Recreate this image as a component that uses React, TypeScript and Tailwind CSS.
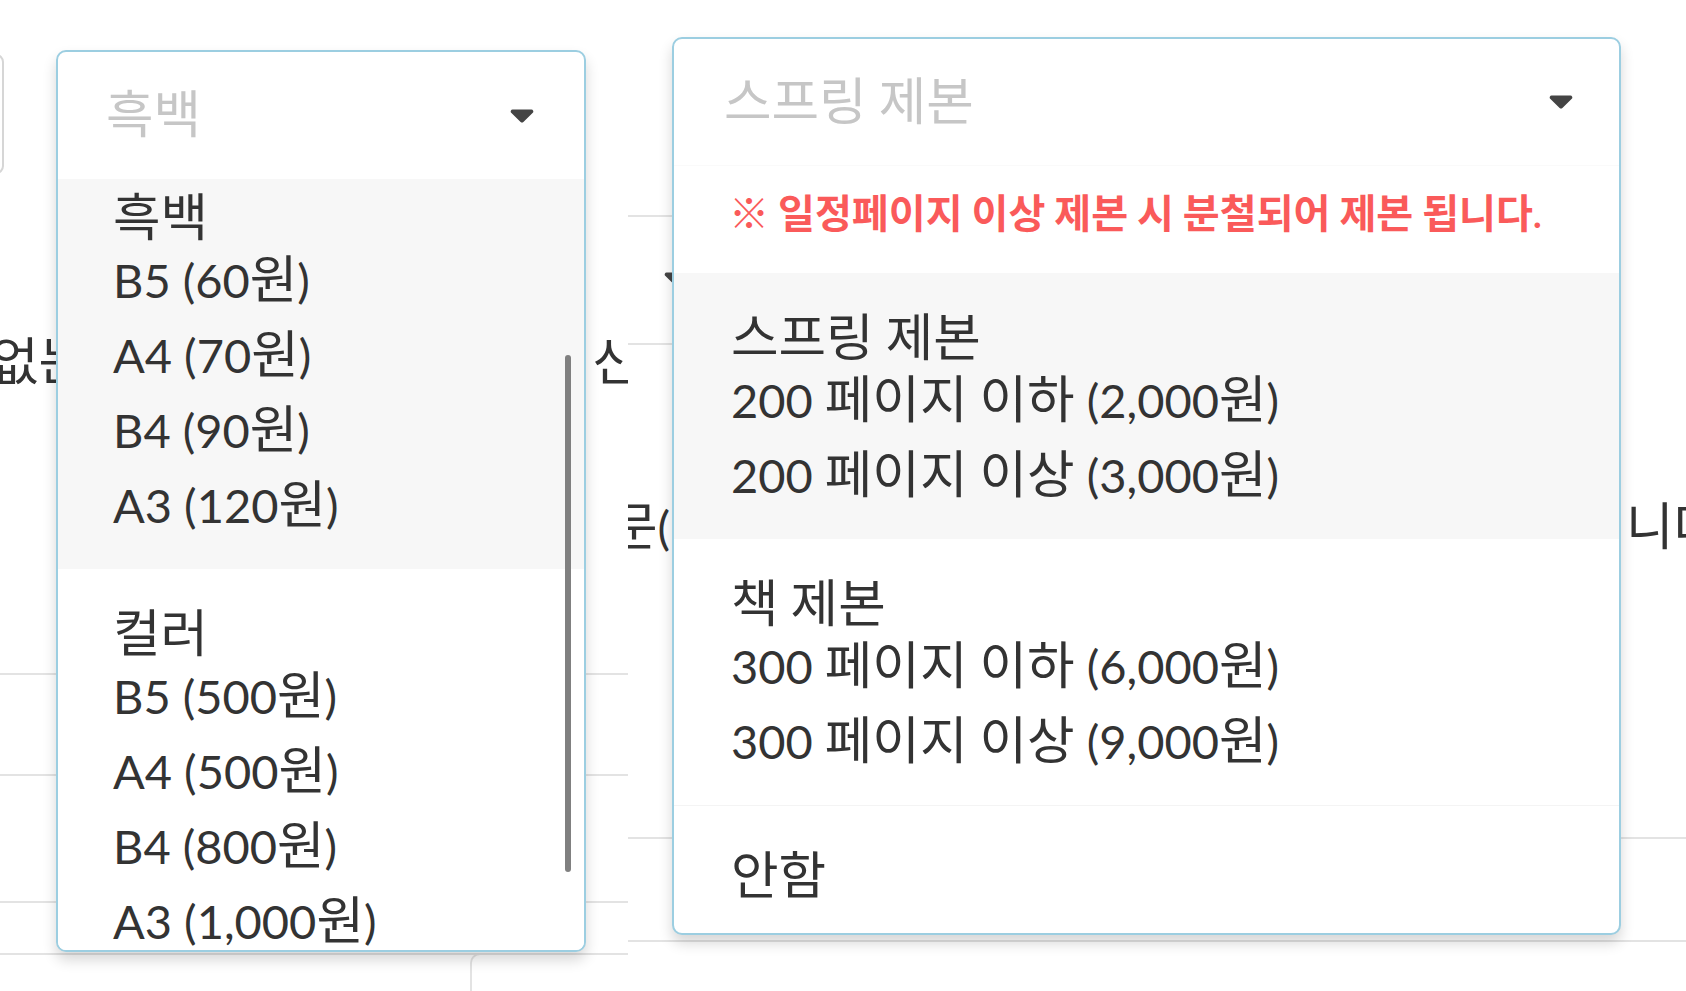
import React from "react";

const Caret = () => (
  <svg width="24" height="14" viewBox="0 0 24 14" aria-hidden="true" className="block">
    <path
      d="M2.6 0.6 H21.4 A1.9 1.9 0 0 1 22.8 3.8 L13.4 12.9 A2 2 0 0 1 10.6 12.9 L1.2 3.8 A1.9 1.9 0 0 1 2.6 0.6 Z"
      fill="#444"
    />
  </svg>
);

// Korean runs render a touch larger, as the reference's Korean face does
const K = ({ t }: { t: string }) => (
  <>
    {t.split(/([\u3131-\uD79D※]+)/).map((part, i) =>
      /[\u3131-\uD79D※]/.test(part) ? (
        <span key={i} className="text-[1.1em] leading-[0]">
          {part}
        </span>
      ) : (
        <React.Fragment key={i}>{part}</React.Fragment>
      )
    )}
  </>
);

const Option = ({ t, pad }: { t: string; pad: string }) => (
  <div className={`${pad} py-[10px] leading-[55px] text-[47px] text-[#333] whitespace-nowrap`}>
    <K t={t} />
  </div>
);

const Group = ({ label, items, gray, pad }: { label: string; items: string[]; gray?: boolean; pad: string }) => (
  <div className={`pt-[40px] pb-[26px] ${gray ? "bg-[#f7f7f7]" : "bg-white"}`}>
    <div className={`${pad} leading-[50px] text-[47px] text-[#333] whitespace-nowrap`}>
      <K t={label} />
    </div>
    {items.map((t) => (
      <Option key={t} t={t} pad={pad} />
    ))}
  </div>
);

const Line = ({ className = "" }: { className?: string }) => <div className={`h-[2px] bg-[#e3e3e3] ${className}`} />;

const bgText = "leading-[55px] text-[47px] text-[#333] whitespace-nowrap";

export default function App() {
  return (
    <div className="w-[1686px] h-[991px] bg-white overflow-hidden flex font-['Lato','Noto_Sans_CJK_KR',sans-serif]">
      {/* Left half of the composite */}
      <div className="relative w-[628px] h-full shrink-0 overflow-hidden">
        {/* page underneath */}
        <div className="flex flex-col">
          <div className="mt-[54px] ml-[-100px] w-[104px] h-[120px] border-2 border-[#d6d6d6] rounded-[8px]" />
          <div className={`mt-[161px] flex ${bgText}`}>
            <span className="ml-[-9px] w-[601px] shrink-0">
              <K t="없는 경우" />
            </span>
            <span>
              <K t="신청" />
            </span>
          </div>
          <Line className="mt-[283px]" />
          <Line className="mt-[99px]" />
          <Line className="mt-[125px]" />
          <Line className="mt-[50px]" />
          <div className="ml-[470px] mt-[-2px] h-[60px] border-l-2 border-t-2 border-[#e3e3e3] rounded-tl-[10px]" />
        </div>

        {/* open select menu */}
        <div className="absolute left-[56px] top-[50px] z-10 w-[530px] h-[902px] flex flex-col bg-white border-2 border-[#9ccee1] rounded-[10px] overflow-hidden shadow-[0_8px_14px_rgba(0,0,0,0.16)]">
          <div className="h-[127px] shrink-0 flex items-center justify-between pl-[48px] pr-[50px]">
            <span className="leading-[55px] text-[47px] text-[#c6c6c6]">
              <K t="흑백" />
            </span>
            <Caret />
          </div>
          <div className="relative flex-1 overflow-hidden">
            <div className="mt-[-26px]">
              <Group pad="pl-[55px]" gray label="흑백" items={["B5 (60원)", "A4 (70원)", "B4 (90원)", "A3 (120원)"]} />
              <Group pad="pl-[55px]" label="컬러" items={["B5 (500원)", "A4 (500원)", "B4 (800원)", "A3 (1,000원)"]} />
            </div>
            <div className="absolute right-[13px] top-[176px] w-[6px] h-[517px] rounded-full bg-[#808080]" />
          </div>
        </div>
      </div>

      {/* Right half of the composite */}
      <div className="relative flex-1 h-full overflow-hidden">
        <div className="flex flex-col">
          <Line className="mt-[215px] w-[300px]" />
          <div className="mt-[55px] ml-[36px]">
            <Caret />
          </div>
          <Line className="mt-[57px] w-[300px]" />
          <div className={`mt-[155px] flex ${bgText}`}>
            <span className="ml-[-18px] w-[1016px] shrink-0">
              <K t="문(" />
            </span>
            <span>
              <K t="니다" />
            </span>
          </div>
          <Line className="mt-[282px]" />
          <Line className="mt-[101px]" />
        </div>

        <div className="absolute left-[44px] top-[37px] z-10 w-[949px] flex flex-col bg-white border-2 border-[#9ccee1] rounded-[10px] overflow-hidden shadow-[0_8px_14px_rgba(0,0,0,0.16)]">
          <div className="h-[127px] shrink-0 flex items-center justify-between pl-[50px] pr-[46px] border-b border-[#fafafa]">
            <span className="leading-[55px] text-[47px] text-[#c6c6c6]">
              <K t="스프링 제본" />
            </span>
            <Caret />
          </div>
          <div className="pl-[55px] pt-[26px] pb-[36px] leading-[45px] text-[36.5px] font-bold text-[#fa5a5a] whitespace-nowrap">
            <K t="※ 일정페이지 이상 제본 시 분철되어 제본 됩니다." />
          </div>
          <Group pad="pl-[57px]" gray label="스프링 제본" items={["200 페이지 이하 (2,000원)", "200 페이지 이상 (3,000원)"]} />
          <Group pad="pl-[57px]" label="책 제본" items={["300 페이지 이하 (6,000원)", "300 페이지 이상 (9,000원)"]} />
          <div className="border-t border-[#f4f4f4] pt-[33px] pb-[19px]">
            <Option pad="pl-[57px]" t="안함" />
          </div>
        </div>
      </div>
    </div>
  );
}
